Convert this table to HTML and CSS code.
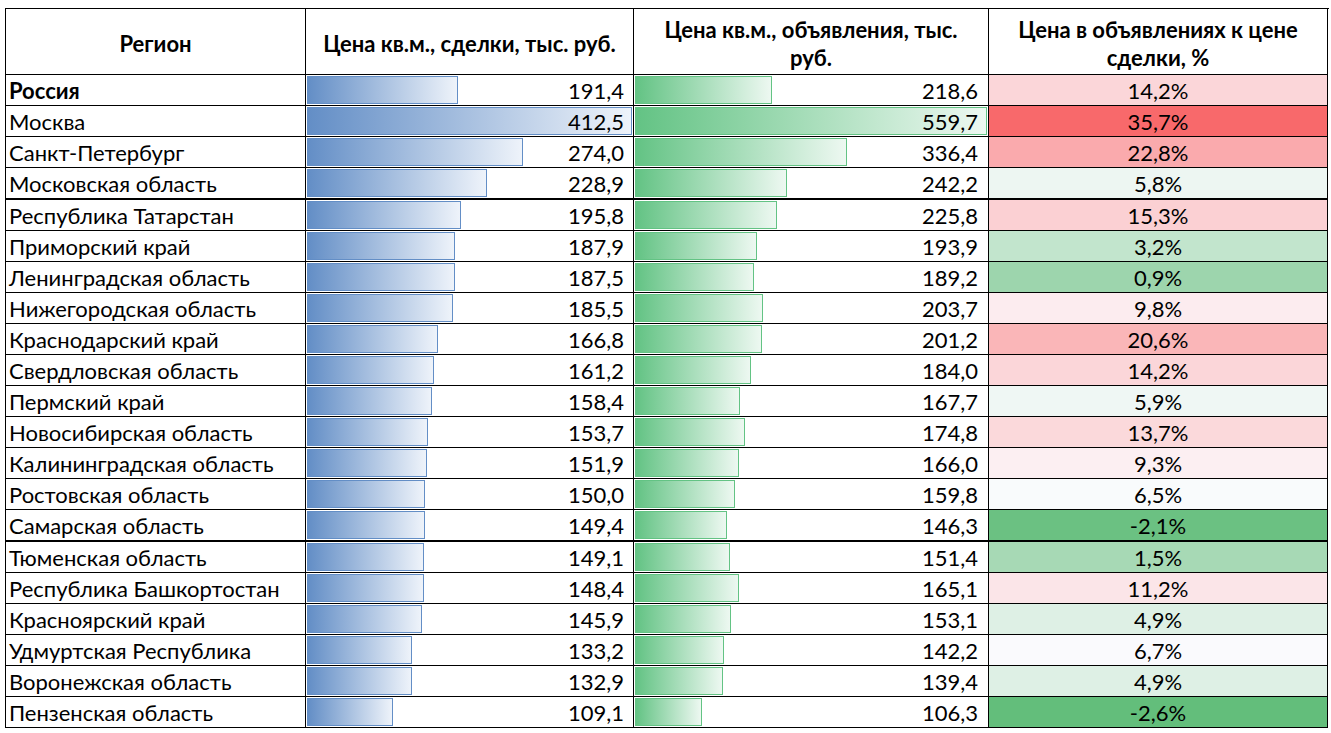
FILE: index.html
```html
<!DOCTYPE html>
<html lang="ru">
<head>
<meta charset="utf-8">
<title>Цены на жильё по регионам</title>
<link rel="stylesheet" href="styles.css">
</head>
<body>
<div class="sheet">
  <div class="hd">Регион</div>
  <div class="hd h2">Цена кв.м., сделки, тыс. руб.</div>
  <div class="hd h3">Цена кв.м., объявления, тыс. руб.</div>
  <div class="hd h4">Цена в объявлениях к цене сделки, %</div>

  <div class="reg b">Россия</div>
  <div class="bc blue"><div class="bar" style="width:46.40%"></div><span class="num">191,4</span></div>
  <div class="bc green"><div class="bar" style="width:39.06%"></div><span class="num">218,6</span></div>
  <div class="pct" style="background:rgb(251,214,217)">14,2%</div>

  <div class="reg">Москва</div>
  <div class="bc blue"><div class="bar" style="width:100%"></div><span class="num">412,5</span></div>
  <div class="bc green"><div class="bar" style="width:100%"></div><span class="num">559,7</span></div>
  <div class="pct" style="background:rgb(248,105,107)">35,7%</div>

  <div class="reg">Санкт-Петербург</div>
  <div class="bc blue"><div class="bar" style="width:66.42%"></div><span class="num">274,0</span></div>
  <div class="bc green"><div class="bar" style="width:60.10%"></div><span class="num">336,4</span></div>
  <div class="pct" style="background:rgb(250,170,173)">22,8%</div>

  <div class="reg thick">Московская область</div>
  <div class="bc blue thick"><div class="bar" style="width:55.49%"></div><span class="num">228,9</span></div>
  <div class="bc green thick"><div class="bar" style="width:43.27%"></div><span class="num">242,2</span></div>
  <div class="pct thick" style="background:rgb(237,246,242)">5,8%</div>

  <div class="reg">Республика Татарстан</div>
  <div class="bc blue"><div class="bar" style="width:47.47%"></div><span class="num">195,8</span></div>
  <div class="bc green"><div class="bar" style="width:40.34%"></div><span class="num">225,8</span></div>
  <div class="pct" style="background:rgb(251,208,211)">15,3%</div>

  <div class="reg">Приморский край</div>
  <div class="bc blue"><div class="bar" style="width:45.55%"></div><span class="num">187,9</span></div>
  <div class="bc green"><div class="bar" style="width:34.64%"></div><span class="num">193,9</span></div>
  <div class="pct" style="background:rgb(194,229,205)">3,2%</div>

  <div class="reg">Ленинградская область</div>
  <div class="bc blue"><div class="bar" style="width:45.45%"></div><span class="num">187,5</span></div>
  <div class="bc green"><div class="bar" style="width:33.80%"></div><span class="num">189,2</span></div>
  <div class="pct" style="background:rgb(157,213,173)">0,9%</div>

  <div class="reg">Нижегородская область</div>
  <div class="bc blue"><div class="bar" style="width:44.97%"></div><span class="num">185,5</span></div>
  <div class="bc green"><div class="bar" style="width:36.39%"></div><span class="num">203,7</span></div>
  <div class="pct" style="background:rgb(252,236,239)">9,8%</div>

  <div class="reg">Краснодарский край</div>
  <div class="bc blue"><div class="bar" style="width:40.44%"></div><span class="num">166,8</span></div>
  <div class="bc green"><div class="bar" style="width:35.95%"></div><span class="num">201,2</span></div>
  <div class="pct" style="background:rgb(250,182,184)">20,6%</div>

  <div class="reg">Свердловская область</div>
  <div class="bc blue"><div class="bar" style="width:39.08%"></div><span class="num">161,2</span></div>
  <div class="bc green"><div class="bar" style="width:32.87%"></div><span class="num">184,0</span></div>
  <div class="pct" style="background:rgb(251,214,217)">14,2%</div>

  <div class="reg">Пермский край</div>
  <div class="bc blue"><div class="bar" style="width:38.40%"></div><span class="num">158,4</span></div>
  <div class="bc green"><div class="bar" style="width:29.96%"></div><span class="num">167,7</span></div>
  <div class="pct" style="background:rgb(239,247,244)">5,9%</div>

  <div class="reg">Новосибирская область</div>
  <div class="bc blue"><div class="bar" style="width:37.26%"></div><span class="num">153,7</span></div>
  <div class="bc green"><div class="bar" style="width:31.23%"></div><span class="num">174,8</span></div>
  <div class="pct" style="background:rgb(251,217,219)">13,7%</div>

  <div class="reg">Калининградская область</div>
  <div class="bc blue"><div class="bar" style="width:36.82%"></div><span class="num">151,9</span></div>
  <div class="bc green"><div class="bar" style="width:29.66%"></div><span class="num">166,0</span></div>
  <div class="pct" style="background:rgb(252,239,242)">9,3%</div>

  <div class="reg">Ростовская область</div>
  <div class="bc blue"><div class="bar" style="width:36.36%"></div><span class="num">150,0</span></div>
  <div class="bc green"><div class="bar" style="width:28.55%"></div><span class="num">159,8</span></div>
  <div class="pct" style="background:rgb(249,251,252)">6,5%</div>

  <div class="reg thick">Самарская область</div>
  <div class="bc blue thick"><div class="bar" style="width:36.22%"></div><span class="num">149,4</span></div>
  <div class="bc green thick"><div class="bar" style="width:26.14%"></div><span class="num">146,3</span></div>
  <div class="pct thick" style="background:rgb(107,193,130)">-2,1%</div>

  <div class="reg">Тюменская область</div>
  <div class="bc blue"><div class="bar" style="width:36.15%"></div><span class="num">149,1</span></div>
  <div class="bc green"><div class="bar" style="width:27.05%"></div><span class="num">151,4</span></div>
  <div class="pct" style="background:rgb(167,217,181)">1,5%</div>

  <div class="reg">Республика Башкортостан</div>
  <div class="bc blue"><div class="bar" style="width:35.98%"></div><span class="num">148,4</span></div>
  <div class="bc green"><div class="bar" style="width:29.50%"></div><span class="num">165,1</span></div>
  <div class="pct" style="background:rgb(251,229,232)">11,2%</div>

  <div class="reg">Красноярский край</div>
  <div class="bc blue"><div class="bar" style="width:35.37%"></div><span class="num">145,9</span></div>
  <div class="bc green"><div class="bar" style="width:27.35%"></div><span class="num">153,1</span></div>
  <div class="pct" style="background:rgb(222,240,229)">4,9%</div>

  <div class="reg">Удмуртская Республика</div>
  <div class="bc blue"><div class="bar" style="width:32.29%"></div><span class="num">133,2</span></div>
  <div class="bc green"><div class="bar" style="width:25.41%"></div><span class="num">142,2</span></div>
  <div class="pct" style="background:rgb(250,250,253)">6,7%</div>

  <div class="reg">Воронежская область</div>
  <div class="bc blue"><div class="bar" style="width:32.22%"></div><span class="num">132,9</span></div>
  <div class="bc green"><div class="bar" style="width:24.91%"></div><span class="num">139,4</span></div>
  <div class="pct" style="background:rgb(222,240,229)">4,9%</div>

  <div class="reg">Пензенская область</div>
  <div class="bc blue"><div class="bar" style="width:26.45%"></div><span class="num">109,1</span></div>
  <div class="bc green"><div class="bar" style="width:18.99%"></div><span class="num">106,3</span></div>
  <div class="pct" style="background:rgb(99,190,123)">-2,6%</div>
</div>
</body>
</html>
```

FILE: styles.css
```css
html, body {
  margin: 0;
  padding: 0;
  background: #ffffff;
}

body {
  font-family: "Lato", "Liberation Sans", sans-serif;
  font-size: 22px;
  color: #000;
}

.sheet {
  margin: 8px 0 0 5px;
  width: 1323px;
  display: grid;
  grid-template-columns: 300px 328px 355px 339px;
  grid-template-rows: 66px repeat(3, 31px) 32px repeat(10, 31px) 32px repeat(6, 31px);
  border-top: 1px solid #000;
  border-left: 1px solid #000;
}

.sheet > div {
  box-sizing: border-box;
  border-right: 1px solid #000;
  border-bottom: 1px solid #000;
  min-width: 0;
}

.sheet > div.thick {
  border-bottom-width: 2px;
}

.hd {
  font-weight: 700;
  display: flex;
  align-items: center;
  justify-content: center;
  text-align: center;
  line-height: 28px;
  padding: 4px 8px 0;
}

.hd.h3 {
  padding: 4px 26px 0;
}

.hd.h4 {
  padding: 4px 16px 0;
}

.reg {
  display: flex;
  align-items: center;
  padding: 1px 0 0 3px;
  white-space: nowrap;
}

.reg.b {
  font-weight: 700;
}

.bc {
  display: grid;
  padding: 1px 1px 2px 1px;
}

.bc .bar,
.bc .num {
  grid-area: 1 / 1;
}

.bar {
  box-sizing: border-box;
  height: 100%;
}

.blue .bar {
  border: 1px solid #638ec6;
  background: linear-gradient(90deg, #638ec6 0%, #eef3fa 100%);
}

.green .bar {
  border: 1px solid #63c384;
  background: linear-gradient(90deg, #63c384 0%, #edf8f1 100%);
}

.num {
  justify-self: end;
  align-self: center;
  padding: 1px 8px 0 0;
}

.green .num {
  padding-right: 9px;
}

.pct {
  display: flex;
  align-items: center;
  justify-content: center;
  padding-top: 1px;
}
```
